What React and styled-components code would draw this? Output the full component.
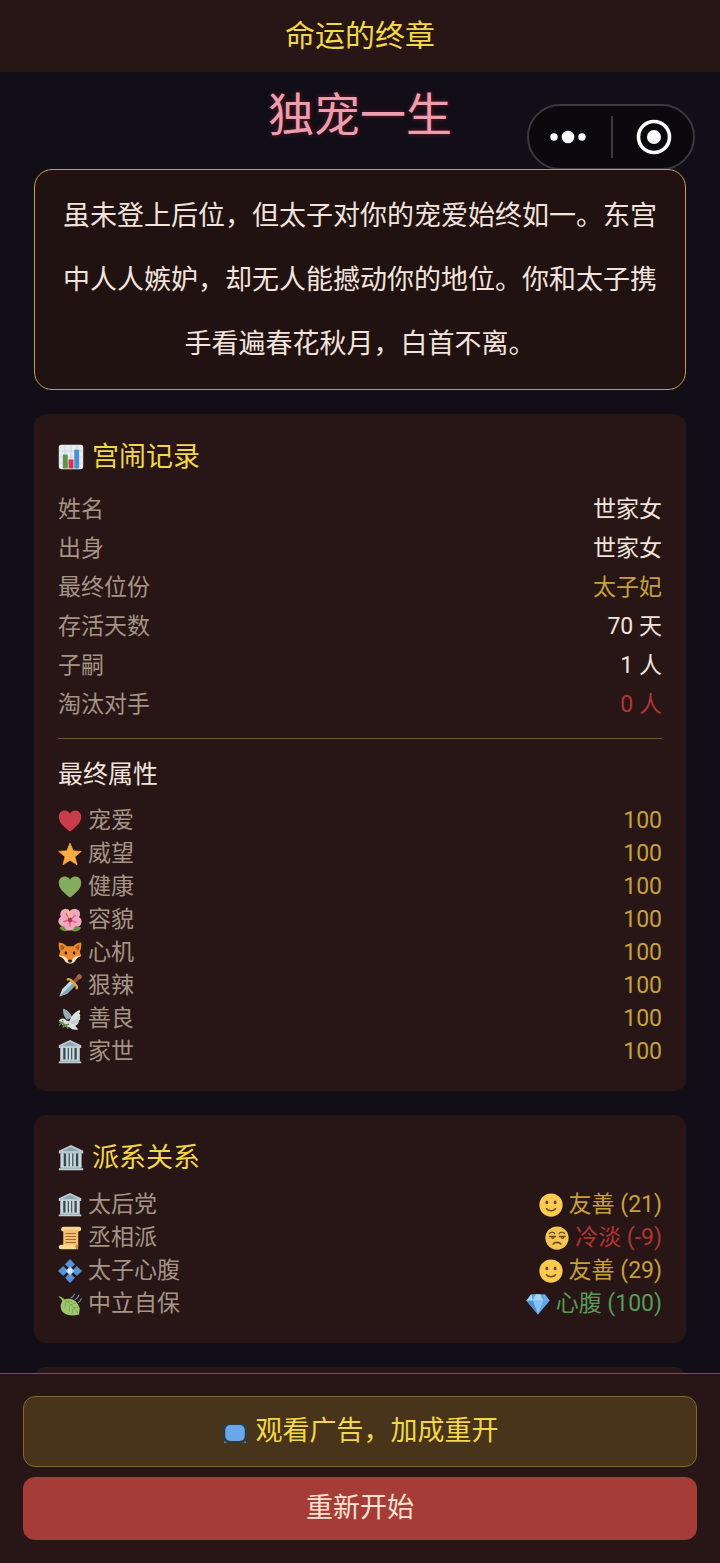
import React from 'react'
import styled, {createGlobalStyle, css} from 'styled-components'

const colors = {
  night: '#120e18',
  panel: '#281616',
  story: '#211212',
  gold: '#c5a03c',
  brightGold: '#f2d748',
  cream: '#f2e4dc',
  muted: '#a59384',
  pink: '#ee9db0',
  red: '#b03535',
  green: '#559c55',
  line: '#735636',
}

const GlobalStyle = createGlobalStyle`
  * {
    box-sizing: border-box;
  }
  body {
    margin: 0;
    background: ${colors.night};
    color: ${colors.cream};
    font-family: Roboto, "Noto Sans CJK SC", sans-serif;
  }
  h1, h2, h3, p, dl, dd {
    margin: 0;
    font-weight: 400;
  }
`

const drawings = {
  chart: (
    <>
      <rect x="1" y="1" width="30" height="30" rx="3" fill="#e6ecf0" />
      <path d="M1 8.500h30M1 16h30M1 23.500h30M8.500 1v30M16 1v30M23.500 1v30" stroke="#c3d2da" strokeWidth="1" />
      <path d="M6 13h6v17H6z" fill="#5c9444" />
      <path d="M13 19h6v11h-6z" fill="#d0344e" />
      <path d="M20 7h6v23h-6z" fill="#4a8fdb" />
    </>
  ),
  heart: (
    <path d="M16 30C11 26 1 19 1 10.500C1 5.500 4.500 2 9 2c3 0 5.500 1.500 7 4c1.500-2.500 4-4 7-4c4.500 0 8 3.500 8 8.500C31 19 21 26 16 30z" fill="#ca3c49" />
  ),
  greenHeart: (
    <path d="M16 30C11 26 1 19 1 10.500C1 5.500 4.500 2 9 2c3 0 5.500 1.500 7 4c1.500-2.500 4-4 7-4c4.500 0 8 3.500 8 8.500C31 19 21 26 16 30z" fill="#83ad5c" />
  ),
  star: (
    <path d="M16 1.500l4.200 10.300 10.800.7-8.400 7 2.800 10.800L16 24.300l-9.400 6 2.800-10.800-8.400-7 10.800-.7z" fill="#f7ac3d" stroke="#f7ac3d" strokeLinejoin="round" />
  ),
  flower: (
    <>
      <path d="M2 27c2-5 9-4 12 3c-4 2-9 1-12-3zM18 30c3-6 9-6 13-4c-2 5-8 7-13 4z" fill="#66933f" />
      <g fill="#f0a8be">
        <ellipse cx="10" cy="8.500" rx="7" ry="7.500" />
        <ellipse cx="22" cy="8" rx="7.500" ry="7" />
        <ellipse cx="24.500" cy="18" rx="7" ry="7" />
        <ellipse cx="15.500" cy="23" rx="7.500" ry="7" />
        <ellipse cx="7.500" cy="17.500" rx="7" ry="7" />
      </g>
      <path d="M16 16l-5-8M16 16l7-6M16 16l8 3M16 16l0 8M16 16l-8 2" stroke="#d9638a" strokeWidth="2" strokeLinecap="round" />
      <circle cx="16" cy="16" r="3" fill="#c22f56" />
      <path d="M15 12L13 3" stroke="#f3c453" strokeWidth="2.500" strokeLinecap="round" />
    </>
  ),
  fox: (
    <>
      <path d="M1 2c4 0 8 2 10.500 5h9C23 4 27 2 31 2c.5 5-.5 9-2 12l2 6c-4 1-6 3-8 6c-2 3-4 4-7 4s-5-1-7-4c-2-3-4-5-8-6l2-6C1.500 11 .5 7 1 2z" fill="#ed8a2d" />
      <path d="M3.500 5c3 .5 4.500 2 5.500 4l-4 4C3.500 10 3.300 7 3.500 5zM28.500 5c-3 .5-4.500 2-5.500 4l4 4c1.500-3 1.700-6 1.500-8z" fill="#a85a25" />
      <path d="M1 20c5-1 9 0 12 5l3 1 3-1c3-5 7-6 12-5c-4 1-6 3-8 6c-2 3-4 4-7 4s-5-1-7-4c-2-3-4-5-8-6z" fill="#f7e3c8" />
      <ellipse cx="10.500" cy="16" rx="1.700" ry="2.300" fill="#33211b" />
      <ellipse cx="21.500" cy="16" rx="1.700" ry="2.300" fill="#33211b" />
      <path d="M13 25.500c1.500-1 4.500-1 6 0c-.5 2.300-1.700 3.500-3 3.500s-2.500-1.200-3-3.500z" fill="#2b2021" />
    </>
  ),
  dagger: (
    <g transform="rotate(45 16 16)">
      <path d="M11.500 11h9v15L16 36l-4.500-10z" fill="#c3dae5" />
      <path d="M16 11h4.500v15L16 36z" fill="#86a8ba" />
      <path d="M13.500-1h5v10h-5z" fill="#99543c" />
      <path d="M13.500 2h5M13.500 5.500h5" stroke="#6d3527" strokeWidth="1" />
      <circle cx="16" cy="-1.500" r="3.300" fill="#a96247" />
      <path d="M7.500 12c1-3 3-2.500 5-2.500h7c2 0 4-.5 5 2.500" fill="none" stroke="#e6a93b" strokeWidth="3" strokeLinecap="round" />
    </g>
  ),
  dove: (
    <>
      <path d="M12 17C8 13 6 8 7 2c6 2 10 6 12 12z" fill="#97abb5" />
      <path d="M15 19c3-8 8-13 14-15c1 2 0 4-1 5c2 1 2 3 1 4c1 2 1 4-1 5c0 3-2 6-5 7l4 5c-5 1-9 0-12-3C9 27 5 24 4 20l-3-1c2-4 7-5 10-1z" fill="#d9e2e3" />
      <path d="M17 20c5 0 9-3 11-7M18 22c4 0 8-2 10-4" fill="none" stroke="#9eb2bb" strokeWidth="1" />
      <circle cx="6.500" cy="18.500" r=".9" fill="#263238" />
      <path d="M2 20c4 0 7 3 11 8M4 22l-2 2M8 23l-1 4M11 24l3-1" fill="none" stroke="#60863d" strokeWidth="2" strokeLinecap="round" />
    </>
  ),
  temple: (
    <>
      <path d="M5 10h22v17H5z" fill="#344850" />
      <path d="M16 0L1 7v3.500h30V7z" fill="#b9c9d1" />
      <path d="M16 2.500L6 7.500h20z" fill="#8ba3af" />
      <path d="M3 10h4v17H3zM10 10h3v17h-3zM14.500 10h3v17h-3zM19 10h3v17h-3zM25 10h4v17h-4z" fill="#cbd8de" />
      <path d="M3 26h26v2.500h2V31H1v-2.500h2z" fill="#c2d0d7" />
      <path d="M3 28.500h26" stroke="#8ba3af" />
    </>
  ),
  scroll: (
    <>
      <path d="M7 4h20v22H7z" fill="#f2c173" />
      <path d="M7 1h21c4 0 4 6 0 6h-2V5H9c0 3-4 3-5 0c0-2 1-4 3-4z" fill="#fad48e" />
      <path d="M4 25h20c-1 3 0 6 3 6H4c-4 0-4-6 0-6z" fill="#fbd792" />
      <path d="M24 25h3v6c-3 0-4-3-3-6z" fill="#c68b46" />
      <path d="M10 10h14M10 14h14M10 18h14M10 22h14" stroke="#a3653c" strokeWidth="1.600" />
    </>
  ),
  diamondDot: (
    <>
      <path d="M16 .5l6 6.500-6 6-6-6zM16 19l6 6-6 6.500L10 25zM.5 16L7 10l6 6-6 6zM19 16l6-6 6.500 6-6.500 6z" fill="#5396dc" stroke="#5396dc" strokeLinejoin="round" />
      <path d="M16 10l6 6-6 6-6-6z" fill="#9bd0f5" />
      <circle cx="16" cy="16" r="3.200" fill="#d4effa" />
    </>
  ),
  leaf: (
    <>
      <path d="M1 6c3 0 5 1 7 4c8-3 18 0 21 12l-1 8c-10 3-22 1-24-8c-1-4 0-7 2-10C5 10 3 8 1 6z" fill="#a1c76c" />
      <path d="M1 6c9 4 19 12 27 24M11 13l7-1M16 17l8-2M20 21l7-1M10 13l-1 9M15 17v9M20 22l-1 7" fill="none" stroke="#7ba650" strokeWidth="1.300" />
      <path d="M17 8c3-1 4-2 5-5M23 10c3-1 4-3 5-6M27 14c2-1 3-2 4-5" fill="none" stroke="#6f91ae" strokeWidth="1.400" strokeLinecap="round" />
    </>
  ),
  smile: (
    <>
      <circle cx="16" cy="16" r="15.500" fill="#fbcb50" />
      <ellipse cx="10.500" cy="12.500" rx="1.900" ry="2.600" fill="#6b462c" />
      <ellipse cx="21.500" cy="12.500" rx="1.900" ry="2.600" fill="#6b462c" />
      <path d="M10 21c3 3.500 9 3.500 12 0" fill="none" stroke="#6b462c" strokeWidth="2.200" strokeLinecap="round" />
    </>
  ),
  unamused: (
    <>
      <circle cx="16" cy="16" r="15.500" fill="#f4c651" />
      <path d="M6 10c2-2 5-2 7 0M19 10c2-2 5-2 7 0M6 14h8M19 14h8M9 15c0 2 3 2 3 0M22 15c0 2 3 2 3 0" fill="none" stroke="#694830" strokeWidth="1.700" strokeLinecap="round" />
      <path d="M11 24c2-3 8-3 10 0" fill="none" stroke="#694830" strokeWidth="2.200" strokeLinecap="round" />
    </>
  ),
  gem: (
    <>
      <path d="M7 3h18l6.500 8.500L16 30 .5 11.500z" fill="#5ca6e5" />
      <path d="M7 3L.5 11.500H9zM13 3h6l4 8.500H9z" fill="#a9d5f4" />
      <path d="M25 3l6.500 8.500H23z" fill="#6cb1ea" />
      <path d="M9 11.500h14L16 30z" fill="#86c1f0" />
      <path d="M.5 11.500H9L16 30z" fill="#4a91d6" />
    </>
  ),
  tv: (
    <>
      <path d="M16 7L11 1M16 7l5-6" stroke="#40372a" strokeWidth="1.500" />
      <rect x="1" y="6" width="30" height="23" rx="3" fill="#2f3b42" />
      <path d="M3 28h5l-1 3H4zM24 28h5l-1 3h-3z" fill="#33434d" />
      <rect x="4" y="7.500" width="24" height="19.500" rx="6" fill="#68a8e8" />
      <circle cx="3.500" cy="28.500" r="1.100" fill="#7f9099" />
      <circle cx="28.500" cy="28.500" r="1.100" fill="#7f9099" />
    </>
  ),
}

const Emoji = ({name, large}) => (
  <EmojiSvg viewBox="0 0 32 32" $large={large} aria-hidden="true">
    {drawings[name]}
  </EmojiSvg>
)

const records = [
  {label: '姓名', value: '世家女'},
  {label: '出身', value: '世家女'},
  {label: '最终位份', value: '太子妃', color: colors.gold},
  {label: '存活天数', value: '70 天'},
  {label: '子嗣', value: '1 人'},
  {label: '淘汰对手', value: '0 人', color: colors.red},
]

const attributes = [
  {icon: 'heart', label: '宠爱', value: 100},
  {icon: 'star', label: '威望', value: 100},
  {icon: 'greenHeart', label: '健康', value: 100},
  {icon: 'flower', label: '容貌', value: 100},
  {icon: 'fox', label: '心机', value: 100},
  {icon: 'dagger', label: '狠辣', value: 100},
  {icon: 'dove', label: '善良', value: 100},
  {icon: 'temple', label: '家世', value: 100},
]

const factions = [
  {icon: 'temple', label: '太后党', mood: 'smile', value: '友善 (21)', color: colors.gold},
  {icon: 'scroll', label: '丞相派', mood: 'unamused', value: '冷淡 (-9)', color: colors.red},
  {icon: 'diamondDot', label: '太子心腹', mood: 'smile', value: '友善 (29)', color: colors.gold},
  {icon: 'leaf', label: '中立自保', mood: 'gem', value: '心腹 (100)', color: colors.green},
]

const App = () => (
  <>
    <GlobalStyle />
    <Page>
      <Header>命运的终章</Header>
      <Capsule>
        <MoreButton type="button" aria-label="更多">
          <svg width="40" height="16" viewBox="0 0 40 16" fill="#fff">
            <circle cx="6" cy="8" r="3.700" />
            <circle cx="20" cy="8" r="6.300" />
            <circle cx="34" cy="8" r="3.700" />
          </svg>
        </MoreButton>
        <CloseButton type="button" aria-label="关闭">
          <svg width="36" height="36" viewBox="0 0 36 36">
            <circle cx="18" cy="18" r="15.500" fill="none" stroke="#fff" strokeWidth="3.600" />
            <circle cx="18" cy="18" r="7" fill="#fff" />
          </svg>
        </CloseButton>
      </Capsule>
      <Content>
        <EndingTitle>独宠一生</EndingTitle>
        <Story>
          虽未登上后位，但太子对你的宠爱始终如一。东宫中人人嫉妒，却无人能撼动你的地位。你和太子携手看遍春花秋月，白首不离。
        </Story>
        <Card>
          <CardTitle><Emoji name="chart" large />宫闹记录</CardTitle>
          <List>
            {records.map(({label, value, color}) => (
              <Row key={label} $tall>
                <Label>{label}</Label>
                <Value $color={color}>{value}</Value>
              </Row>
            ))}
          </List>
          <Divider />
          <SubTitle>最终属性</SubTitle>
          <List>
            {attributes.map(({icon, label, value}) => (
              <Row key={label}>
                <Label><Emoji name={icon} />{label}</Label>
                <Value $color={colors.gold}>{value}</Value>
              </Row>
            ))}
          </List>
        </Card>
        <Card>
          <CardTitle $tight><Emoji name="temple" large />派系关系</CardTitle>
          <List>
            {factions.map(({icon, label, mood, value, color}) => (
              <Row key={label}>
                <Label><Emoji name={icon} />{label}</Label>
                <Value $color={color}><Emoji name={mood} />{value}</Value>
              </Row>
            ))}
          </List>
        </Card>
        <Card />
      </Content>
      <Footer>
        <AdButton type="button"><Emoji name="tv" large />观看广告，加成重开</AdButton>
        <RestartButton type="button">重新开始</RestartButton>
      </Footer>
    </Page>
  </>
)

const Page = styled.div`
  position: relative;
  height: 100vh;
  display: flex;
  flex-direction: column;
`

const Header = styled.header`
  flex: none;
  padding: 16px;
  background: ${colors.panel};
  color: ${colors.brightGold};
  font-size: 30px;
  line-height: 40px;
  text-align: center;
`

const Capsule = styled.div`
  position: absolute;
  top: 104px;
  right: 25px;
  width: 168px;
  height: 66px;
  display: flex;
  border: 2px solid #3b3840;
  border-radius: 33px;
  background: #0b090e;
`

const CapsuleButton = styled.button`
  flex: 1;
  display: flex;
  align-items: center;
  justify-content: center;
  border: 0;
  background: none;
`

const MoreButton = styled(CapsuleButton)`
  padding: 0 4px 0 0;
`

const CloseButton = styled(CapsuleButton)`
  padding: 0 0 0 4px;
  background: linear-gradient(#3b3840, #3b3840) left center / 2px 42px no-repeat;
`

const Content = styled.main`
  position: relative;
  flex: 1;
  min-height: 0;
  overflow-y: auto;
  scrollbar-width: none;
  padding: 12px 34px 24px;
  display: flex;
  flex-direction: column;
  pointer-events: none;

  & > * {
    flex: none;
    pointer-events: auto;
  }
`

const EndingTitle = styled.h1`
  margin-bottom: 23px;
  color: ${colors.pink};
  font-size: 46px;
  line-height: 62px;
  text-align: center;
  text-shadow: 0 0 4px rgba(160, 40, 45, 0.6);
`

const Story = styled.p`
  padding: 14px 24px 13px;
  border: 1px solid ${colors.gold};
  border-radius: 18px;
  background: ${colors.story};
  font-size: 27px;
  line-height: 64px;
  text-align: center;
`

const Card = styled.section`
  margin-top: 24px;
  padding: 23px 24px;
  border-radius: 12px;
  background: ${colors.panel};
`

const CardTitle = styled.h2`
  display: flex;
  align-items: center;
  gap: 8px;
  margin-bottom: ${props => props.$tight ? '10px' : '13px'};
  color: ${colors.brightGold};
  font-size: 27px;
  line-height: 40px;
`

const SubTitle = styled.h3`
  margin-bottom: 11px;
  font-size: 25px;
  line-height: 36px;
`

const Divider = styled.hr`
  height: 1px;
  margin: 14px 0 18px;
  border: 0;
  background: ${colors.line};
`

const List = styled.dl`
  display: flex;
  flex-direction: column;
`

const Row = styled.div`
  display: flex;
  justify-content: space-between;
  font-size: 23px;
  line-height: ${props => props.$tall ? '39px' : '33px'};
`

const rowText = css`
  display: flex;
  align-items: center;
  gap: 6px;
`

const Label = styled.dt`
  ${rowText}
  color: ${colors.muted};
`

const Value = styled.dd`
  ${rowText}
  color: ${props => props.$color || colors.cream};
`

const EmojiSvg = styled.svg`
  ${props => props.$large ? css`width: 26px; height: 26px;` : css`width: 24px; height: 24px;`}
  flex: none;
`

const Footer = styled.footer`
  flex: none;
  position: relative;
  padding: 22px 23px 23px;
  display: flex;
  flex-direction: column;
  gap: 10px;
  border-top: 1px solid ${colors.line};
  background: ${colors.panel};
`

const Button = styled.button`
  display: flex;
  align-items: center;
  justify-content: center;
  gap: 8px;
  border: 0;
  border-radius: 12px;
  font-family: inherit;
  font-size: 27px;
  line-height: 39px;
  cursor: pointer;
`

const AdButton = styled(Button)`
  padding: 15px;
  border: 1px solid #80683c;
  background: #48341a;
  color: ${colors.brightGold};
`

const RestartButton = styled(Button)`
  padding: 12px;
  background: #a63c38;
  color: #f8e2d0;
`

export default App
